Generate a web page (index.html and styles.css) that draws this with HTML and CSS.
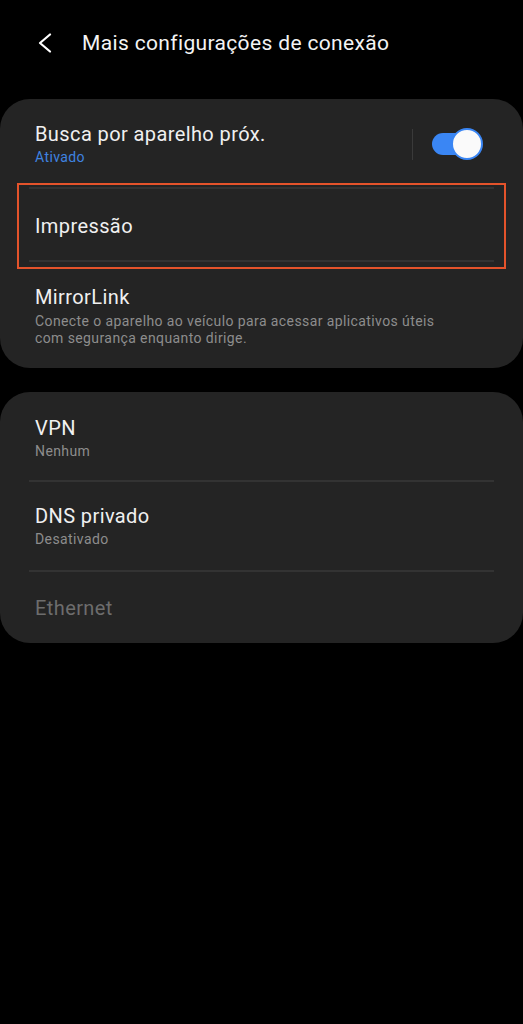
FILE: index.html
```html
<!DOCTYPE html>
<html lang="pt-BR">
<head>
    <meta charset="UTF-8">
    <meta name="viewport" content="width=device-width, initial-scale=1.0">
    <title>Mais configurações de conexão</title>
    <link rel="stylesheet" href="styles.css">
</head>
<body>
    <div class="header">
        <svg class="back" width="16" height="20" viewBox="0 0 16 20">
            <path d="M13 1.5 L3 10 L13 18.5" fill="none" stroke="#fff" stroke-width="2.2" stroke-linecap="round" stroke-linejoin="round"/>
        </svg>
        <h1>Mais configurações de conexão</h1>
    </div>

    <div class="card">
        <div class="row row-switch">
            <div class="text">
                <div class="title">Busca por aparelho próx.</div>
                <div class="sub blue">Ativado</div>
            </div>
            <div class="vline"></div>
            <div class="toggle"><div class="knob"></div></div>
        </div>
        <div class="divider"></div>
        <div class="row row-single highlight">
            <div class="title">Impressão</div>
        </div>
        <div class="divider"></div>
        <div class="row row-mirror">
            <div class="title">MirrorLink</div>
            <div class="sub">Conecte o aparelho ao veículo para acessar aplicativos úteis com segurança enquanto dirige.</div>
        </div>
    </div>

    <div class="card">
        <div class="row row-two">
            <div class="title">VPN</div>
            <div class="sub">Nenhum</div>
        </div>
        <div class="divider"></div>
        <div class="row row-two">
            <div class="title">DNS privado</div>
            <div class="sub">Desativado</div>
        </div>
        <div class="divider"></div>
        <div class="row row-last">
            <div class="title disabled">Ethernet</div>
        </div>
    </div>
</body>
</html>
```

FILE: styles.css
```css
body {
    margin: 0;
    background-color: #000;
    font-family: Roboto, "Noto Sans", sans-serif;
    color: #f2f2f2;
    min-height: 1024px;
}
.header {
    height: 99px;
    display: flex;
    align-items: flex-start;
    padding-top: 31px;
    box-sizing: border-box;
}
.back {
    margin-left: 37px;
    margin-top: 2px;
}
.header h1 {
    margin: 0 0 0 29px;
    font-size: 21px;
    font-weight: 400;
    letter-spacing: 0.35px;
    line-height: 24px;
    color: #f4f4f4;
}
.card {
    background-color: #242424;
    border-radius: 30px;
    margin-bottom: 24px;
}
.row {
    padding: 0 35px;
    position: relative;
}
.title {
    font-size: 20px;
    letter-spacing: 0.4px;
    line-height: 24px;
    color: #f0f0f0;
}
.sub {
    font-size: 14px;
    letter-spacing: 0.4px;
    line-height: 17px;
    color: #8d8d8d;
}
.blue {
    color: #3f83e0;
}
.disabled {
    color: #6d6d6d;
}
.divider {
    height: 2px;
    background-color: #333;
    margin: 0 29px;
}
.row-switch {
    height: 88px;
    display: flex;
    align-items: center;
    padding-right: 43px;
    padding-top: 2px;
    box-sizing: border-box;
}
.row-switch .text {
    flex: 1;
}
.row-switch .sub {
    margin-top: 3px;
}
.vline {
    width: 1px;
    height: 31px;
    background-color: #3a3a3a;
    margin-right: 19px;
}
.toggle {
    width: 48px;
    height: 22px;
    border-radius: 11px;
    background-color: #3a86f4;
    position: relative;
}
.knob {
    position: absolute;
    right: -3px;
    top: -5px;
    width: 28px;
    height: 28px;
    border-radius: 50%;
    background-color: #fafafa;
    border: 2px solid #3a86f4;
}
.row-single {
    height: 71px;
    display: flex;
    align-items: center;
    padding-top: 3px;
    box-sizing: border-box;
}
.highlight::after {
    content: "";
    position: absolute;
    left: 17px;
    right: 17px;
    top: -6px;
    bottom: -9px;
    border: 2px solid #e4532b;
}
.row-mirror {
    height: 106px;
    padding-top: 23px;
    padding-right: 70px;
    box-sizing: border-box;
}
.row-mirror .sub {
    margin-top: 4px;
}
.row-two {
    height: 88px;
    padding-top: 24px;
    box-sizing: border-box;
}
.row-two .sub {
    margin-top: 3px;
}
.row-two + .divider + .row-two {
    padding-top: 22px;
}
.row-last {
    height: 71px;
    display: flex;
    align-items: center;
}
```
